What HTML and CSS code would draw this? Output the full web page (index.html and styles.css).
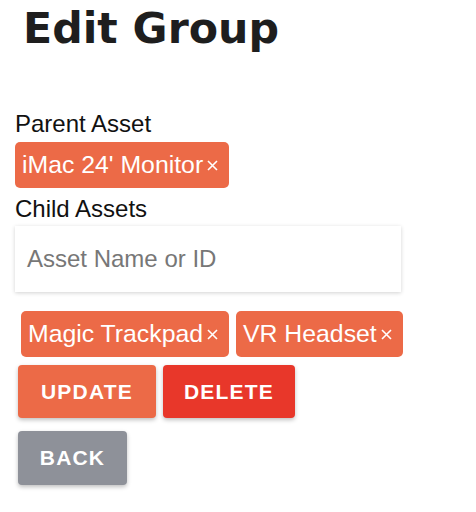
FILE: index.html
```html
<!DOCTYPE html>
<html>
<head>
<meta charset="utf-8">
<link rel="stylesheet" href="styles.css">
</head>
<body>
<div class="page">
  <h1 class="title">Edit Group</h1>
  <div class="form">
    <div class="label">Parent Asset</div>
    <div class="chips">
      <span class="chip">iMac 24' Monitor<svg class="x" viewBox="0 0 11 11"><path d="M1 1L10 10M10 1L1 10"/></svg></span>
    </div>
    <div class="label">Child Assets</div>
    <div class="input">Asset Name or ID</div>
    <div class="chips child">
      <span class="chip">Magic Trackpad<svg class="x" viewBox="0 0 11 11"><path d="M1 1L10 10M10 1L1 10"/></svg></span>
      <span class="chip">VR Headset<svg class="x" viewBox="0 0 11 11"><path d="M1 1L10 10M10 1L1 10"/></svg></span>
    </div>
    <div class="actions">
      <button class="btn update">UPDATE</button>
      <button class="btn delete">DELETE</button>
    </div>
    <div class="actions back-row">
      <button class="btn back">BACK</button>
    </div>
  </div>
</div>
</body>
</html>
```
FILE: styles.css
```css
html, body {
  margin: 0;
  padding: 0;
  background: #fff;
}
.page {
  width: 476px;
  height: 512px;
  font-family: "Liberation Sans", Arial, sans-serif;
}
.title {
  margin: 0;
  padding: 2px 0 0 23px;
  font-family: "DejaVu Sans", sans-serif;
  font-weight: 700;
  font-size: 42.7px;
  line-height: 52px;
  color: #1e1e1e;
  letter-spacing: 0;
}
.form {
  padding: 56px 0 0 15px;
  display: flex;
  flex-direction: column;
  align-items: flex-start;
}
.label {
  font-size: 24px;
  line-height: 28px;
  color: #111;
}
.chips {
  display: flex;
  gap: 7px;
  margin: 4px 0 7px 0;
}
.chip {
  display: inline-flex;
  align-items: center;
  height: 46px;
  padding: 0 11px 0 7px;
  background: #ec6a47;
  color: #fff;
  font-size: 24.8px;
  border-radius: 5px;
}
.chip .x {
  width: 11px;
  height: 11px;
  margin-left: 4px;
  margin-top: 1px;
  stroke: #fff;
  stroke-width: 1.6;
  fill: none;
}
.input {
  margin-top: 3px;
  box-sizing: border-box;
  width: 386px;
  height: 66px;
  padding: 0 12px;
  display: flex;
  align-items: center;
  font-size: 24px;
  color: #777;
  background: #fff;
  box-shadow: 0 1px 4px rgba(0,0,0,0.18);
}
.chips.child {
  margin: 19px 0 0 6px;
}
.actions {
  display: flex;
  gap: 7px;
  margin: 8px 0 0 3px;
}
.back-row {
  margin-top: 13px;
}
.btn {
  border: none;
  height: 53px;
  border-radius: 4px;
  color: #fff;
  font-family: "Liberation Sans", Arial, sans-serif;
  font-weight: 700;
  font-size: 21px;
  letter-spacing: 1.2px;
  box-shadow: 0 2px 4px rgba(0,0,0,0.25);
  padding: 0;
}
.update {
  width: 138px;
  background: #ec6a47;
}
.delete {
  width: 132px;
  background: #e8372a;
}
.back {
  width: 109px;
  height: 54px;
  background: #8e9199;
}
```
